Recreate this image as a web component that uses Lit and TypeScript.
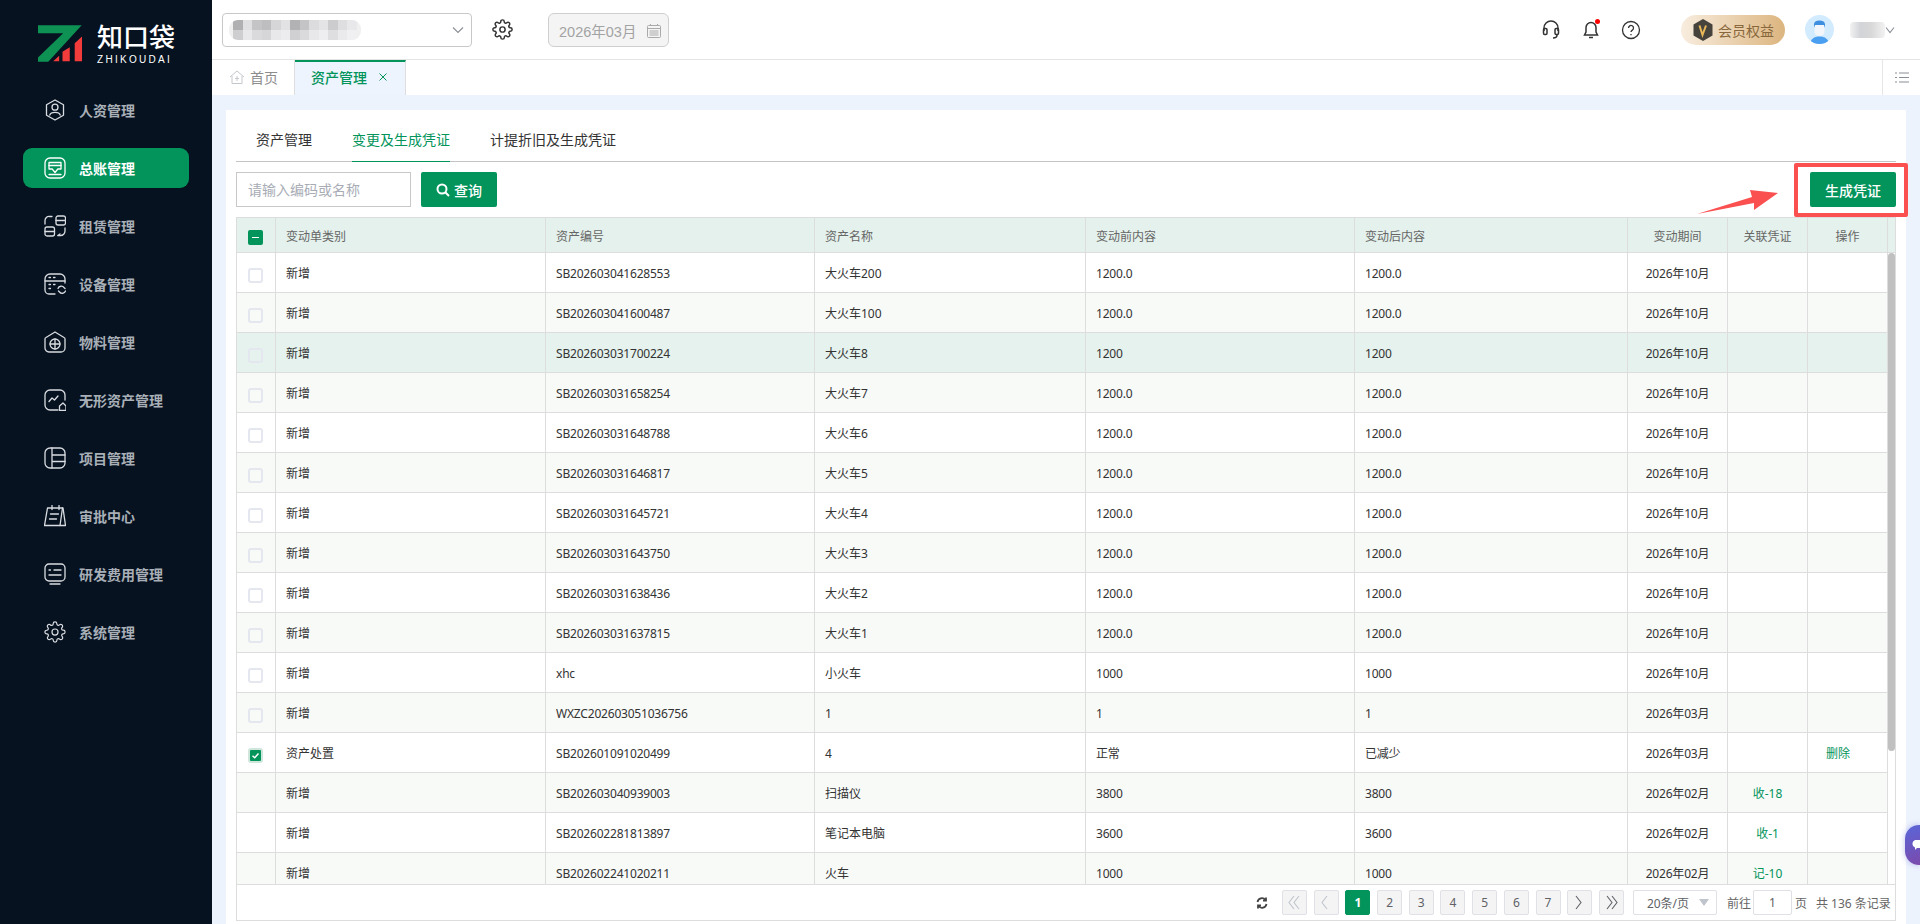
import { LitElement, html, css, svg } from "lit";
import { customElement, state } from "lit/decorators.js";
import { classMap } from "lit/directives/class-map.js";

const GEAR = "M19.4 15a1.65 1.65 0 0 0 .33 1.82l.06.06a2 2 0 0 1 0 2.83 2 2 0 0 1-2.83 0l-.06-.06a1.65 1.65 0 0 0-1.82-.33 1.65 1.65 0 0 0-1 1.51V21a2 2 0 0 1-2 2 2 2 0 0 1-2-2v-.09A1.65 1.65 0 0 0 9 19.4a1.65 1.65 0 0 0-1.82.33l-.06.06a2 2 0 0 1-2.83 0 2 2 0 0 1 0-2.83l.06-.06a1.65 1.65 0 0 0 .33-1.82 1.65 1.65 0 0 0-1.51-1H3a2 2 0 0 1-2-2 2 2 0 0 1 2-2h.09A1.65 1.65 0 0 0 4.6 9a1.65 1.65 0 0 0-.33-1.82l-.06-.06a2 2 0 0 1 0-2.83 2 2 0 0 1 2.83 0l.06.06a1.65 1.65 0 0 0 1.82.33H9a1.65 1.65 0 0 0 1-1.51V3a2 2 0 0 1 2-2 2 2 0 0 1 2 2v.09a1.65 1.65 0 0 0 1 1.51 1.65 1.65 0 0 0 1.82-.33l.06-.06a2 2 0 0 1 2.83 0 2 2 0 0 1 0 2.83l-.06.06a1.65 1.65 0 0 0-.33 1.82V9a1.65 1.65 0 0 0 1.51 1H21a2 2 0 0 1 2 2 2 2 0 0 1-2 2h-.09a1.65 1.65 0 0 0-1.51 1z";

// sidebar icons, all on a 22x22 box
const NAV = [
    {
        label: "人资管理",
        icon: svg`<path d="M11 1l8.500 4.800v10.400L11 21l-8.500-4.800V5.800z" /><circle cx="11" cy="8.200" r="3" /><path d="M5.800 16c1-3.600 9.400-3.600 10.400 0" />`,
    },
    {
        label: "总账管理",
        active: true,
        icon: svg`<rect x="1" y="1" width="20" height="20" rx="5" /><path d="M5 5.500h12v6.500h-3.200L11 15.500 8.200 12H5z" /><path d="M5 8.500h12M5 17.500h12" />`,
    },
    {
        label: "租赁管理",
        icon: svg`<path d="M1 9V5.500A4 4 0 0 1 5.500 1.500H8" /><rect x="12" y="1" width="9.500" height="9" rx="2" /><path d="M12 5.500h9.500" /><rect x="1" y="12" width="9.500" height="9" rx="2" /><path d="M1 16.500h9.500" /><path d="M14 20.500h2.500a4.500 4.500 0 0 0 4.500-4.500v-3" /><path d="M14 20.500l2-1.500" />`,
    },
    {
        label: "设备管理",
        icon: svg`<path d="M21 10V6a5 5 0 0 0-5-5H6a5 5 0 0 0-5 5v11a4 4 0 0 0 4 4h6" /><path d="M1 8h20" /><path d="M5 4.500h1.500M9.500 4.500H11M5 11.500h1.500M9.500 11.500H11M5 15.500h1.500" /><path d="M14 15.500a3.500 3.500 0 0 1 6-1l1 1M21.500 18a3.500 3.500 0 0 1-6 1l-1-1" />`,
    },
    {
        label: "物料管理",
        icon: svg`<path d="M11 1l9 5.500a1.500 1.500 0 0 1 1 1.500v9a4 4 0 0 1-4 4H5a4 4 0 0 1-4-4V8a1.500 1.500 0 0 1 1-1.500z" /><circle cx="11" cy="13" r="5" /><path d="M6 13h10M11 8v10" />`,
    },
    {
        label: "无形资产管理",
        icon: svg`<path d="M21 11V6a5 5 0 0 0-5-5H6a5 5 0 0 0-5 5v10a5 5 0 0 0 5 5h8" /><path d="M5 12.500l3-3.500 2.500 2 3.500-4" /><path d="M15.500 17l3.500-3 3 3v4.500h-6.500z" />`,
    },
    {
        label: "项目管理",
        icon: svg`<rect x="1" y="1" width="20" height="20" rx="5" /><path d="M8 1v20M8 8h13M8 14.500h13" />`,
    },
    {
        label: "审批中心",
        icon: svg`<path d="M3.500 3H19l2.500 17.500H.500z" /><path d="M18.500 3L16 20.500M8 .5v4M15 .5v4M6.500 9h8M5.500 14h7" />`,
    },
    {
        label: "研发费用管理",
        icon: svg`<rect x="1" y="1" width="20" height="17" rx="4" /><path d="M5 7h1.500M10 7h7M5 12h12M6 21h10" />`,
    },
    {
        label: "系统管理",
        icon: svg`<g transform="scale(.917)"><path d="${GEAR}" /><circle cx="12" cy="12" r="3.300" /></g>`,
    },
];

type Row = {
    type?: string;
    code: string;
    name: string;
    before: string;
    after: string;
    period: string;
    voucher?: string;
    action?: string;
    check?: "off" | "on" | "none";
    hover?: boolean;
};

const car = (code: string, name: string, v = "1200.0", hover = false): Row => ({
    code,
    name,
    before: v,
    after: v,
    period: "2026年10月",
    hover,
});

const ROWS: Row[] = [
    car("SB202603041628553", "大火车200"),
    car("SB202603041600487", "大火车100"),
    car("SB202603031700224", "大火车8", "1200", true),
    car("SB202603031658254", "大火车7"),
    car("SB202603031648788", "大火车6"),
    car("SB202603031646817", "大火车5"),
    car("SB202603031645721", "大火车4"),
    car("SB202603031643750", "大火车3"),
    car("SB202603031638436", "大火车2"),
    car("SB202603031637815", "大火车1"),
    car("xhc", "小火车", "1000"),
    { code: "WXZC202603051036756", name: "1", before: "1", after: "1", period: "2026年03月" },
    { type: "资产处置", code: "SB202601091020499", name: "4", before: "正常", after: "已减少", period: "2026年03月", action: "删除", check: "on" },
    { code: "SB202603040939003", name: "扫描仪", before: "3800", after: "3800", period: "2026年02月", voucher: "收-18", check: "none" },
    { code: "SB202602281813897", name: "笔记本电脑", before: "3600", after: "3600", period: "2026年02月", voucher: "收-1", check: "none" },
    { code: "SB202602241020211", name: "火车", before: "1000", after: "1000", period: "2026年02月", voucher: "记-10", check: "none" },
];

const COLS = [39, 270, 269, 271, 269, 273, 100, 80, 80];
const HEADS = ["变动单类别", "资产编号", "资产名称", "变动前内容", "变动后内容"];

// grey values of the blurred company name
const BLUR_A = [176, 224, 196, 190, 214, 226, 178, 196, 220, 228, 204, 222, 232];
const BLUR_B = [206, 232, 218, 214, 232, 236, 208, 218, 232, 238, 222, 234, 240];

@customElement("app-root")
export class AppRoot extends LitElement {
    static styles = css`
        :host {
            display: flex;
            width: 100%;
            height: 100vh;
            overflow: hidden;
            position: relative;
            font-family: "Noto Sans", "Noto Sans CJK SC", sans-serif;
            font-size: 14px;
            color: #333;
            background: #edf3fd;
        }
        svg {
            display: block;
            flex: none;
        }

        /* sidebar */
        .side {
            width: 212px;
            flex: none;
            background: #061220;
            display: flex;
            flex-direction: column;
        }
        .logo {
            height: 81px;
            padding-left: 38px;
            display: flex;
            gap: 15px;
            align-items: flex-start;
            box-sizing: border-box;
            padding-top: 25px;
        }
        .logo-text {
            color: #fff;
            display: flex;
            flex-direction: column;
            margin-top: -5px;
        }
        .logo-cn {
            font-family: "Noto Sans CJK SC", sans-serif;
            font-size: 26px;
            line-height: 32px;
            font-weight: 500;
        }
        .logo-en {
            font-family: "Liberation Sans", sans-serif;
            font-size: 10px;
            line-height: 12px;
            letter-spacing: 2.300px;
            margin-top: 2px;
        }
        .nav {
            display: flex;
            flex-direction: column;
            gap: 18px;
            padding: 9px 23px 0;
        }
        .nav-item {
            height: 40px;
            border-radius: 9px;
            display: flex;
            align-items: center;
            gap: 13px;
            padding-left: 21px;
            color: #a8afb7;
            font-weight: 700;
            font-size: 14px;
            font-family: "Noto Sans CJK SC", sans-serif;
        }
        .nav-item span {
            padding-bottom: 1px;
        }
        .nav-item svg {
            fill: none;
            stroke: #d9dce0;
            stroke-width: 1.300;
            stroke-linejoin: round;
            stroke-linecap: round;
        }
        .nav-item.active {
            background: #02945b;
            color: #fff;
        }
        .nav-item.active svg {
            stroke: #fff;
        }

        /* top */
        .main {
            flex: 1;
            min-width: 0;
            display: flex;
            flex-direction: column;
        }
        .top {
            height: 59px;
            flex: none;
            background: #fff;
            border-bottom: 1px solid #e4e4e4;
            display: flex;
            align-items: center;
            padding: 0 25px 0 10px;
        }
        .company {
            width: 250px;
            height: 34px;
            box-sizing: border-box;
            border: 1px solid #c8c8c8;
            border-radius: 4px;
            display: flex;
            align-items: center;
            justify-content: space-between;
            padding: 0 7px 0 6px;
            margin-top: 1px;
        }
        .blur {
            width: 132px;
            height: 20px;
            border-radius: 9px;
            overflow: hidden;
            display: grid;
            grid-template-columns: repeat(13, 1fr);
            grid-template-rows: 1fr 1fr;
            background: #f0f0f0;
            padding: 0 4px;
            box-sizing: border-box;
        }
        .gear-btn {
            margin: 0 0 0 20px;
        }
        .date {
            margin-left: 35px;
            width: 121px;
            height: 34px;
            box-sizing: border-box;
            background: #f4f4f4;
            border: 1px solid #cfcfcf;
            border-radius: 6px;
            display: flex;
            align-items: center;
            gap: 11px;
            padding-left: 10px;
            color: #a3a3a3;
            font-family: "Liberation Sans", "Noto Sans CJK SC", sans-serif;
            font-size: 14.500px;
            margin-top: 1px;
        }
        .spacer {
            flex: 1;
        }
        .tool-icons {
            display: flex;
            gap: 20px;
            align-items: center;
            margin-right: 40px;
        }
        .bell {
            position: relative;
        }
        .bell::after {
            content: "";
            position: absolute;
            right: 1px;
            top: -1px;
            width: 5px;
            height: 5px;
            border-radius: 50%;
            background: #f00;
        }
        .vip {
            width: 104px;
            height: 30px;
            border-radius: 15px;
            background: linear-gradient(90deg, #f8eddf, #dcb57f);
            display: flex;
            align-items: center;
            gap: 5px;
            padding-left: 12px;
            box-sizing: border-box;
            color: #87673b;
            font-family: "Noto Sans CJK SC", sans-serif;
        }
        .avatar {
            margin-left: 20px;
            width: 29px;
            height: 29px;
            border-radius: 50%;
            background: #d3ebff;
            overflow: hidden;
        }
        .who {
            margin-left: 16px;
            width: 35px;
            height: 16px;
            border-radius: 4px;
            background: linear-gradient(90deg, #f2f2f2, #d2d4d8 30%, #d8d8d8 60%, #f2f2f2);
        }

        /* page tabs */
        .tabs {
            height: 35px;
            flex: none;
            background: #fff;
            display: flex;
        }
        .tab {
            display: flex;
            align-items: center;
            box-sizing: border-box;
            border-right: 1px solid #dedede;
        }
        .tab.home {
            width: 83px;
            padding-left: 17px;
            padding-bottom: 2px;
            gap: 5px;
            color: #8c8c8c;
        }
        .tab.cur {
            width: 111px;
            background: #eef4fd;
            border-top: 2px solid #02945b;
            padding-left: 16px;
            padding-bottom: 4px;
            gap: 11px;
            color: #02945b;
            font-weight: 500;
        }
        .tabs-end {
            margin-left: auto;
            width: 37px;
            border-left: 1px solid #e6e6e6;
            display: flex;
            align-items: center;
            justify-content: center;
        }

        /* content */
        .content {
            flex: 1;
            min-height: 0;
            padding: 15px 14px 0;
            display: flex;
        }
        .panel {
            flex: 1;
            min-width: 0;
            background: #fff;
            padding: 10px 10px 3px;
            display: flex;
            flex-direction: column;
        }
        .subtabs {
            height: 42px;
            flex: none;
            box-sizing: border-box;
            border-bottom: 1px solid #c4c4c4;
            display: flex;
        }
        .subtab {
            padding: 0 20px;
            line-height: 40px;
            height: 42px;
            box-sizing: border-box;
            color: #333;
        }
        .subtab.on {
            color: #02945b;
            position: relative;
        }
        .subtab.on::after {
            content: "";
            position: absolute;
            left: 20px;
            right: 20px;
            bottom: 0;
            height: 1px;
            background: #02945b;
        }
        .bar {
            display: flex;
            align-items: center;
            gap: 10px;
            height: 35px;
            flex: none;
            margin: 10px 0;
        }
        .search {
            width: 175px;
            height: 35px;
            box-sizing: border-box;
            border: 1px solid #c8c8c8;
            padding-left: 11px;
            line-height: 33px;
            color: #a8acb5;
        }
        .btn {
            height: 35px;
            box-sizing: border-box;
            background: #02945b;
            color: #fff;
            border-radius: 2px;
            display: flex;
            align-items: center;
            justify-content: center;
            font-weight: 500;
        }
        .btn.query {
            width: 76px;
            gap: 4px;
        }
        .btn.make {
            width: 86px;
            margin-left: auto;
        }

        /* table */
        .grid-box {
            flex: 1;
            min-height: 0;
            border: 1px solid #ddd;
            display: flex;
            flex-direction: column;
            font-size: 12px;
        }
        table {
            border-collapse: separate;
            border-spacing: 0;
            table-layout: fixed;
            flex: none;
        }
        table.head {
            width: 1658px;
        }
        table.rows {
            width: 1651px;
        }
        th,
        td {
            box-sizing: border-box;
            border-right: 1px solid #ddd;
            border-bottom: 1px solid #ddd;
            padding: 1px 0 0 10px;
            text-align: left;
            font-weight: 400;
            white-space: nowrap;
            overflow: hidden;
        }
        th {
            height: 35px;
            background: #e4f1ec;
            color: #666;
        }
        td {
            height: 40px;
            color: #333;
        }
        th.ctr,
        td.ctr {
            text-align: center;
            padding-left: 0;
        }
        th.gutter {
            border-right: none;
        }
        td.act {
            padding-right: 19px;
        }
        .num {
            letter-spacing: -0.200px;
        }
        tr.alt td {
            background: #f8faf8;
        }
        tr.hov td {
            background: #e5f2ed;
        }
        .link {
            color: #02945b;
        }
        .ck {
            display: block;
            margin: 0 auto;
            width: 15px;
            height: 15px;
            box-sizing: border-box;
            border: 2px solid #e4e7ef;
            border-radius: 3px;
            position: relative;
            left: -1px;
            top: 2px;
        }
        .ck.fill {
            background: #02945b;
            border-color: #cfe6dc;
        }
        .ck.head {
            background: #02945b;
            border: none;
            border-radius: 2px;
        }
        .ck.head::after {
            content: "";
            position: absolute;
            left: 4px;
            right: 4px;
            top: 7px;
            height: 1px;
            background: #fff;
        }
        .grid-body {
            flex: 1;
            min-height: 0;
            display: flex;
            overflow: hidden;
        }
        .sb {
            width: 7px;
            flex: none;
            position: relative;
        }
        .sb-thumb {
            position: absolute;
            left: 0;
            right: 0;
            top: 0;
            height: 498px;
            background: #c0c0c0;
            border-radius: 4px;
        }

        /* pager */
        .pager {
            height: 36px;
            flex: none;
            box-sizing: border-box;
            border-top: 1px solid #ddd;
            display: flex;
            align-items: center;
            padding-left: 1019px;
            color: #666;
            font-size: 12px;
        }
        .pg-list {
            display: flex;
            gap: 6.700px;
            margin-left: 14px;
            margin-right: 9px;
        }
        .pg {
            width: 25px;
            height: 25px;
            box-sizing: border-box;
            border: 1px solid #dfe1e6;
            border-radius: 2px;
            background: #f4f4f5;
            color: #606266;
            display: flex;
            align-items: center;
            justify-content: center;
        }
        .pg.cur {
            background: #02945b;
            border-color: #02945b;
            color: #fff;
            font-weight: 700;
        }
        .size {
            width: 84px;
            height: 25px;
            box-sizing: border-box;
            border: 1px solid #dfe1e6;
            border-radius: 2px;
            display: flex;
            align-items: center;
            justify-content: space-between;
            padding: 0 7px 0 13px;
            color: #606266;
        }
        .size::after {
            content: "";
            border: 5px solid transparent;
            border-top: 7px solid #c0c4cc;
            border-bottom: none;
        }
        .goto {
            margin-left: 10px;
        }
        .page-in {
            width: 39px;
            height: 25px;
            box-sizing: border-box;
            border: 1px solid #dfe1e6;
            border-radius: 2px;
            margin: 0 3px 0 2px;
            text-align: center;
            line-height: 23px;
            color: #606266;
        }
        .total {
            margin-left: 9px;
            white-space: nowrap;
        }

        /* annotation over the page */
        .mark-box {
            position: absolute;
            left: 1794px;
            top: 163px;
            width: 114px;
            height: 54px;
            box-sizing: border-box;
            border: 4px solid #fb5050;
            border-radius: 2px;
            pointer-events: none;
        }
        .mark-arrow {
            position: absolute;
            left: 1696px;
            top: 188px;
        }
        .chat {
            position: absolute;
            right: 0;
            top: 825px;
            width: 15px;
            height: 40px;
            border-radius: 14px 0 0 14px;
            background: linear-gradient(160deg, #5a66da, #7b4aac);
            box-shadow: 0 0 6px rgba(90, 90, 210, 0.400);
            overflow: hidden;
        }
    `;

    @state() private page = 1;

    private chevron(w = 12) {
        return html`<svg width="${w}" height="8" viewBox="0 0 ${w} 8" fill="none" stroke="#8a8f96" stroke-width="1.100"><path d="M1 1.500l${w / 2 - 1} 5 ${w / 2 - 1}-5" /></svg>`;
    }

    private logo() {
        return html`<svg width="44" height="37" viewBox="114 76 133 110">
            <path fill="#0e9254" d="M114 76h132L145 186h-31v-13l76-73h-76z" />
            <path fill="#f23c3c" d="M160 185l18-17v17zM188 185v-29l22-14v43zM225 185v-55l22-20v75z" />
        </svg>`;
    }

    private renderSide() {
        return html`<aside class="side">
            <div class="logo">
                ${this.logo()}
                <div class="logo-text">
                    <span class="logo-cn">知口袋</span>
                    <span class="logo-en">ZHIKOUDAI</span>
                </div>
            </div>
            <nav class="nav">
                ${NAV.map(
                    (n) => html`<div class=${classMap({ "nav-item": true, active: !!n.active })}>
                        <svg width="22" height="22" viewBox="0 0 22 22">${n.icon}</svg>
                        <span>${n.label}</span>
                    </div>`
                )}
            </nav>
        </aside>`;
    }

    private renderTop() {
        return html`<header class="top">
            <div class="company">
                <div class="blur">
                    ${BLUR_A.map((g) => html`<i style="background:rgb(${g},${g},${g + 2})"></i>`)}
                    ${BLUR_B.map((g) => html`<i style="background:rgb(${g},${g},${g + 2})"></i>`)}
                </div>
                ${this.chevron()}
            </div>
            <svg class="gear-btn" width="21" height="21" viewBox="0 0 24 24" fill="none" stroke="#333" stroke-width="1.700"><path d="${GEAR}" /><circle cx="12" cy="12" r="3" /></svg>
            <div class="date">
                <span>2026年03月</span>
                <svg width="14" height="15" viewBox="0 0 14 15" fill="none" stroke="#aaa"><rect x=".5" y="2.500" width="13" height="12" rx="1" /><path d="M.5 5.500h13M3.500 1v2M10.500 1v2M2.500 8h9M2.500 10h9M2.500 12h9" /></svg>
            </div>
            <div class="spacer"></div>
            <div class="tool-icons">
                <svg width="20" height="20" viewBox="0 0 20 20" fill="none" stroke="#333" stroke-width="1.500"><path d="M3 11V8a7 7 0 0 1 14 0v3" /><rect x="2.500" y="8.500" width="3.500" height="6" rx="1.200" /><rect x="14" y="8.500" width="3.500" height="6" rx="1.200" /><path d="M16 15c0 2-1.500 3-4 3" /></svg>
                <div class="bell">
                    <svg width="20" height="20" viewBox="0 0 20 20" fill="none" stroke="#333" stroke-width="1.500"><path d="M10 2.500a5 5 0 0 0-5 5V12l-1.500 3h13L15 12V7.500a5 5 0 0 0-5-5z" /><path d="M8 17.500h4" /></svg>
                </div>
                <svg width="20" height="20" viewBox="0 0 20 20" fill="none" stroke="#333" stroke-width="1.300"><circle cx="10" cy="10" r="8.500" /><path d="M7.500 8a2.500 2.500 0 1 1 3.800 2.100c-.9.6-1.300 1-1.300 2" /><path d="M10 14v1.200" /></svg>
            </div>
            <div class="vip">
                <svg width="20" height="22" viewBox="0 0 20 22">
                    <path fill="#46433d" d="M10 0l9.500 5.500v11L10 22 .5 16.500v-11z" />
                    <path fill="none" stroke="#e8b858" stroke-width="2" d="M6.500 6.500L9.500 16l3.500-9.500" />
                </svg>
                <span>会员权益</span>
            </div>
            <div class="avatar">
                <svg width="29" height="29" viewBox="0 0 29 29">
                    <path fill="#4a9ff0" d="M5 29c.5-5 4-7.500 9.500-7.500S23.500 24 24 29z" />
                    <rect x="9.500" y="8" width="10" height="13" rx="4.500" fill="#f2f6fa" />
                    <path fill="#3f8fe0" d="M9 13V9.500C9 7 11 5.500 14.500 5.500S20 7 20 9.500V13l-1-3h-9z" />
                </svg>
            </div>
            <div class="who"></div>
            ${this.chevron(10)}
        </header>`;
    }

    private renderTabs() {
        return html`<div class="tabs">
            <div class="tab home">
                <svg width="16" height="14" viewBox="0 0 16 14" fill="none" stroke="#c4c8cc"><path d="M1 7l7-6 7 6M3 6v7.500h10V6" /><path d="M8 6v5M6 8.500h4" /></svg>
                <span>首页</span>
            </div>
            <div class="tab cur">
                <span>资产管理</span>
                <svg width="10" height="10" viewBox="0 0 10 10" fill="none" stroke="#02945b"><path d="M1.500 1.500l7 7M8.500 1.500l-7 7" /></svg>
            </div>
            <div class="tabs-end">
                <svg width="14" height="11" viewBox="0 0 14 11" fill="none" stroke="#8a8f96"><path d="M0 1h2M4 1h10M0 5.500h2M4 5.500h10M0 10h2M4 10h10" /></svg>
            </div>
        </div>`;
    }

    private renderRow(r: Row, i: number) {
        const check = r.check ?? "off";
        const cls = { alt: i % 2 === 1, hov: !!r.hover };
        return html`<tr class=${classMap(cls)}>
            <td class="ctr">
                ${check === "none"
                    ? ""
                    : check === "on"
                      ? html`<span class="ck fill"><svg width="11" height="11" viewBox="0 0 11 11" fill="none" stroke="#fff" stroke-width="1.500"><path d="M2.500 5.800l2.200 2 3.800-4.200" /></svg></span>`
                      : html`<span class="ck"></span>`}
            </td>
            <td>${r.type ?? "新增"}</td>
            <td class="num">${r.code}</td>
            <td>${r.name}</td>
            <td class="num">${r.before}</td>
            <td class="num">${r.after}</td>
            <td class="ctr num">${r.period}</td>
            <td class="ctr link">${r.voucher ?? ""}</td>
            <td class="ctr link act">${r.action ?? ""}</td>
        </tr>`;
    }

    private renderPager() {
        const arrows = {
            first: "M7 1L2 7.500 7 14M12 1L7 7.500 12 14",
            prev: "M8 1L3 7.500 8 14",
            next: "M4 1l5 6.500L4 14",
            last: "M3 1l5 6.500L3 14M8 1l5 6.500L8 14",
        };
        const arrow = (d: string, color: string) =>
            html`<div class="pg"><svg width="15" height="15" viewBox="0 0 15 15" fill="none" stroke="${color}" stroke-width="1.100"><path d="${d}" /></svg></div>`;
        return html`<div class="pager">
            <svg width="12" height="12" viewBox="0 0 12 12" fill="none" stroke="#444" stroke-width="1.800"><path d="M1.500 5A4.500 4.500 0 0 1 9.500 3M10.500 7A4.500 4.500 0 0 1 2.500 9" /><path d="M10 .5v3H7M2 11.500v-3h3" /></svg>
            <div class="pg-list">
                ${arrow(arrows.first, "#c0c4cc")} ${arrow(arrows.prev, "#c0c4cc")}
                ${[1, 2, 3, 4, 5, 6, 7].map(
                    (n) => html`<div class=${classMap({ pg: true, cur: n === this.page })}>${n}</div>`
                )}
                ${arrow(arrows.next, "#606266")} ${arrow(arrows.last, "#606266")}
            </div>
            <div class="size">20条/页</div>
            <span class="goto">前往</span>
            <div class="page-in">1</div>
            <span>页</span>
            <span class="total">共 136 条记录</span>
        </div>`;
    }

    private renderGrid() {
        return html`<div class="grid-box">
            <table class="head">
                <colgroup>
                    ${COLS.map((w) => html`<col style="width:${w}px" />`)}
                    <col style="width:7px" />
                </colgroup>
                <tr>
                    <th class="ctr"><span class="ck head"></span></th>
                    ${HEADS.map((h) => html`<th>${h}</th>`)}
                    <th class="ctr">变动期间</th>
                    <th class="ctr">关联凭证</th>
                    <th class="ctr">操作</th>
                    <th class="gutter"></th>
                </tr>
            </table>
            <div class="grid-body">
                <table class="rows">
                    <colgroup>
                        ${COLS.map((w) => html`<col style="width:${w}px" />`)}
                    </colgroup>
                    ${ROWS.map((r, i) => this.renderRow(r, i))}
                </table>
                <div class="sb"><div class="sb-thumb"></div></div>
            </div>
            ${this.renderPager()}
        </div>`;
    }

    render() {
        return html`
            ${this.renderSide()}
            <div class="main">
                ${this.renderTop()} ${this.renderTabs()}
                <div class="content">
                    <section class="panel">
                        <div class="subtabs">
                            <div class="subtab">资产管理</div>
                            <div class="subtab on">变更及生成凭证</div>
                            <div class="subtab">计提折旧及生成凭证</div>
                        </div>
                        <div class="bar">
                            <div class="search">请输入编码或名称</div>
                            <div class="btn query">
                                <svg width="14" height="14" viewBox="0 0 14 14" fill="none" stroke="#fff" stroke-width="2"><circle cx="6" cy="6" r="4.500" /><path d="M9.500 9.500L13 13" /></svg>
                                <span>查询</span>
                            </div>
                            <div class="btn make">生成凭证</div>
                        </div>
                        ${this.renderGrid()}
                    </section>
                </div>
            </div>
            <div class="mark-box"></div>
            <svg class="mark-arrow" width="84" height="28" viewBox="0 0 84 28"><path fill="#fb5050" d="M1 26L56 9 54 2l28 3-24 17v-7z" /></svg>
            <div class="chat">
                <svg width="15" height="40" viewBox="0 0 15 40"><path fill="#fff" d="M10 15h5v8h-3l-2 2v-2.500a4 4 0 0 1 0-7.500z" /></svg>
            </div>
        `;
    }
}
